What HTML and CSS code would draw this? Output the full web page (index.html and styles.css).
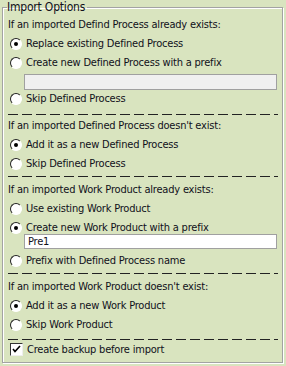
FILE: index.html
```html
<!DOCTYPE html>
<html>
<head>
<meta charset="utf-8">
<link rel="stylesheet" href="styles.css">
</head>
<body>
<fieldset class="opts">
  <legend class="legend">Import Options</legend>

  <div class="head h1">If an imported Defind Process already exists:</div>
  <div class="row"><span class="radio on"></span><span>Replace existing Defined Process</span></div>
  <div class="row"><span class="radio"></span><span>Create new Defined Process with a prefix</span></div>
  <div class="field disabled f1"></div>
  <div class="row r-after1"><span class="radio"></span><span>Skip Defined Process</span></div>
  <div class="sep s1"></div>

  <div class="head">If an imported Defined Process doesn't exist:</div>
  <div class="row"><span class="radio on"></span><span>Add it as a new Defined Process</span></div>
  <div class="row"><span class="radio"></span><span>Skip Defined Process</span></div>
  <div class="sep s2"></div>

  <div class="head">If an imported Work Product already exists:</div>
  <div class="row"><span class="radio"></span><span>Use existing Work Product</span></div>
  <div class="row"><span class="radio on"></span><span>Create new Work Product with a prefix</span></div>
  <div class="field f2">Pre1</div>
  <div class="row r-after2"><span class="radio"></span><span>Prefix with Defined Process name</span></div>
  <div class="sep s3"></div>

  <div class="head">If an imported Work Product doesn't exist:</div>
  <div class="row"><span class="radio on"></span><span>Add it as a new Work Product</span></div>
  <div class="row"><span class="radio"></span><span>Skip Work Product</span></div>
  <div class="sep s4"></div>

  <div class="row check-row"><span class="check"><svg width="9" height="9" viewBox="0 0 9 9"><path d="M1 4 L3 6.5 L8 1" fill="none" stroke="#000" stroke-width="1.6"/></svg></span><span>Create backup before import</span></div>
</fieldset>
</body>
</html>
```

FILE: styles.css
```css
html, body {
  margin: 0;
  padding: 0;
  background: #d9e4bf;
}
body {
  width: 286px;
  height: 366px;
  overflow: hidden;
  font-family: "DejaVu Sans Condensed", "DejaVu Sans", sans-serif;
  font-size: 11px;
  letter-spacing: -0.2px;
  color: #10101a;
}
.opts {
  margin: 0 3px 0 2px;
  padding: 0 4px 0 5px;
  border: 1px solid #a3a3a3;
  box-shadow: inset 1px 1px 0 #fff, 1px 1px 0 #fff;
  height: 363px;
  box-sizing: border-box;
  min-width: 0;
}
.legend {
  padding: 0 2px 0 0;
  margin-left: -1px;
  line-height: 14px;
  font-size: 12px;
}
.head {
  height: 19px;
  line-height: 19px;
  white-space: nowrap;
}
.h1 { margin-top: 1px; }
.row {
  height: 19px;
  display: flex;
  align-items: center;
  white-space: nowrap;
}
.radio {
  position: relative;
  width: 10px;
  height: 10px;
  margin: 0 4px 0 2px;
  border: 1px solid;
  border-color: #222 #fff #fff #222;
  border-radius: 50%;
  background: #fff;
  flex: none;
}
.radio.on::after {
  content: "";
  position: absolute;
  left: 3px;
  top: 3px;
  width: 4px;
  height: 4px;
  border-radius: 50%;
  background: #000;
}
.check {
  width: 11px;
  height: 11px;
  margin: 0 4px 0 2px;
  border: 1px solid;
  border-color: #333 #eee #eee #333;
  background: #fff;
  display: flex;
  align-items: center;
  justify-content: center;
  flex: none;
}
.field {
  margin: 0 1px 0 16px;
  height: 16px;
  box-sizing: border-box;
  border: 1px solid #a0a0a0;
  background: #fff;
  padding-left: 3px;
  line-height: 14px;
}
.field.disabled {
  background: #f0f0f0;
}
.f1 { margin-top: 2px; }
.r-after1 { margin-top: -1px; }
.f2 { margin-top: -3px; height: 15px; line-height: 13px; }
.r-after2 { margin-top: 2px; }
.sep {
  height: 1px;
  margin-right: 0;
  background: repeating-linear-gradient(to right, #222 0 10px, transparent 10px 14px);
}
.s1 { margin-top: 6px; margin-bottom: 1px; }
.s2 { margin-top: 3px; margin-bottom: 3px; }
.s3 { margin-top: 3px; margin-bottom: 3px; }
.s4 { margin-top: 5px; margin-bottom: 0; }
```
